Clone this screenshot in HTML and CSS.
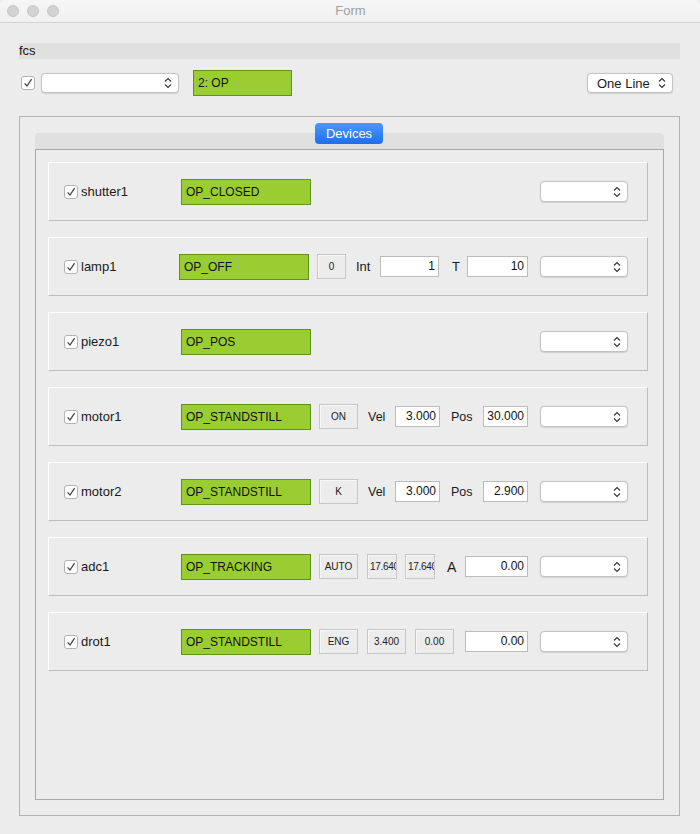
FILE: index.html
```html
<!DOCTYPE html>
<html>
<head>
<meta charset="utf-8">
<title>Form</title>
<link rel="stylesheet" href="styles.css">
</head>
<body>
<div class="window">
  <div class="titlebar">
    <div class="lights"><span class="light"></span><span class="light"></span><span class="light"></span></div>
    <div class="title">Form</div>
  </div>
  <div class="main">
    <div class="fcs">fcs</div>
    <div class="toprow">
      <span class="check"><svg width="14" height="14" viewBox="0 0 14 14"><path d="M3.6 7.4 L6 10 L10.6 3.2" fill="none" stroke="#444" stroke-width="1.3"/></svg></span>
      <div class="combo combo-top"><span></span><svg class="chev" width="8" height="12" viewBox="0 0 8 12"><path d="M1 4.5 L4 1.5 L7 4.5 M1 7.5 L4 10.5 L7 7.5" fill="none" stroke="#333" stroke-width="1.1"/></svg></div>
      <div class="state state-top">2: OP</div>
      <div class="combo combo-line"><span>One Line</span><svg class="chev" width="8" height="12" viewBox="0 0 8 12"><path d="M1 4.5 L4 1.5 L7 4.5 M1 7.5 L4 10.5 L7 7.5" fill="none" stroke="#333" stroke-width="1.1"/></svg></div>
    </div>
    <div class="group">
      <div class="tabs">
        <div class="tabbar"><div class="tab">Devices</div></div>
        <div class="pane">

          <div class="frame">
            <span class="check"><svg width="14" height="14" viewBox="0 0 14 14"><path d="M3.6 7.4 L6 10 L10.6 3.2" fill="none" stroke="#444" stroke-width="1.3"/></svg></span>
            <span class="name">shutter1</span>
            <div class="state">OP_CLOSED</div>
            <div class="combo combo-dev"><span></span><svg class="chev" width="8" height="12" viewBox="0 0 8 12"><path d="M1 4.5 L4 1.5 L7 4.5 M1 7.5 L4 10.5 L7 7.5" fill="none" stroke="#333" stroke-width="1.1"/></svg></div>
          </div>

          <div class="frame">
            <span class="check"><svg width="14" height="14" viewBox="0 0 14 14"><path d="M3.6 7.4 L6 10 L10.6 3.2" fill="none" stroke="#444" stroke-width="1.3"/></svg></span>
            <span class="name name-short">lamp1</span>
            <div class="state">OP_OFF</div>
            <div class="btn btn-narrow">0</div>
            <span class="lbl lbl-int">Int</span>
            <div class="field field-int">1</div>
            <span class="lbl lbl-t">T</span>
            <div class="field field-t">10</div>
            <div class="combo combo-dev"><span></span><svg class="chev" width="8" height="12" viewBox="0 0 8 12"><path d="M1 4.5 L4 1.5 L7 4.5 M1 7.5 L4 10.5 L7 7.5" fill="none" stroke="#333" stroke-width="1.1"/></svg></div>
          </div>

          <div class="frame">
            <span class="check"><svg width="14" height="14" viewBox="0 0 14 14"><path d="M3.6 7.4 L6 10 L10.6 3.2" fill="none" stroke="#444" stroke-width="1.3"/></svg></span>
            <span class="name">piezo1</span>
            <div class="state">OP_POS</div>
            <div class="combo combo-dev"><span></span><svg class="chev" width="8" height="12" viewBox="0 0 8 12"><path d="M1 4.5 L4 1.5 L7 4.5 M1 7.5 L4 10.5 L7 7.5" fill="none" stroke="#333" stroke-width="1.1"/></svg></div>
          </div>

          <div class="frame">
            <span class="check"><svg width="14" height="14" viewBox="0 0 14 14"><path d="M3.6 7.4 L6 10 L10.6 3.2" fill="none" stroke="#444" stroke-width="1.3"/></svg></span>
            <span class="name">motor1</span>
            <div class="state">OP_STANDSTILL</div>
            <div class="btn">ON</div>
            <span class="lbl lbl-vel">Vel</span>
            <div class="field field-sm">3.000</div>
            <span class="lbl lbl-pos">Pos</span>
            <div class="field field-sm">30.000</div>
            <div class="combo combo-dev"><span></span><svg class="chev" width="8" height="12" viewBox="0 0 8 12"><path d="M1 4.5 L4 1.5 L7 4.5 M1 7.5 L4 10.5 L7 7.5" fill="none" stroke="#333" stroke-width="1.1"/></svg></div>
          </div>

          <div class="frame">
            <span class="check"><svg width="14" height="14" viewBox="0 0 14 14"><path d="M3.6 7.4 L6 10 L10.6 3.2" fill="none" stroke="#444" stroke-width="1.3"/></svg></span>
            <span class="name">motor2</span>
            <div class="state">OP_STANDSTILL</div>
            <div class="btn">K</div>
            <span class="lbl lbl-vel">Vel</span>
            <div class="field field-sm">3.000</div>
            <span class="lbl lbl-pos">Pos</span>
            <div class="field field-sm">2.900</div>
            <div class="combo combo-dev"><span></span><svg class="chev" width="8" height="12" viewBox="0 0 8 12"><path d="M1 4.5 L4 1.5 L7 4.5 M1 7.5 L4 10.5 L7 7.5" fill="none" stroke="#333" stroke-width="1.1"/></svg></div>
          </div>

          <div class="frame">
            <span class="check"><svg width="14" height="14" viewBox="0 0 14 14"><path d="M3.6 7.4 L6 10 L10.6 3.2" fill="none" stroke="#444" stroke-width="1.3"/></svg></span>
            <span class="name">adc1</span>
            <div class="state">OP_TRACKING</div>
            <div class="btn">AUTO</div>
            <div class="btn btn-clip">17.640</div>
            <div class="btn btn-clip">17.640</div>
            <span class="lbl lbl-a">A</span>
            <div class="field field-wide">0.00</div>
            <div class="combo combo-dev"><span></span><svg class="chev" width="8" height="12" viewBox="0 0 8 12"><path d="M1 4.5 L4 1.5 L7 4.5 M1 7.5 L4 10.5 L7 7.5" fill="none" stroke="#333" stroke-width="1.1"/></svg></div>
          </div>

          <div class="frame">
            <span class="check"><svg width="14" height="14" viewBox="0 0 14 14"><path d="M3.6 7.4 L6 10 L10.6 3.2" fill="none" stroke="#444" stroke-width="1.3"/></svg></span>
            <span class="name">drot1</span>
            <div class="state">OP_STANDSTILL</div>
            <div class="btn">ENG</div>
            <div class="btn btn-gap">3.400</div>
            <div class="btn btn-gap">0.00</div>
            <div class="field field-wide field-drot">0.00</div>
            <div class="combo combo-dev"><span></span><svg class="chev" width="8" height="12" viewBox="0 0 8 12"><path d="M1 4.5 L4 1.5 L7 4.5 M1 7.5 L4 10.5 L7 7.5" fill="none" stroke="#333" stroke-width="1.1"/></svg></div>
          </div>

        </div>
      </div>
    </div>
  </div>
</div>
</body>
</html>
```
FILE: styles.css
```css
* { box-sizing: border-box; }
html, body {
  margin: 0;
  padding: 0;
  background: #ececec;
  font-family: "Liberation Sans", Arial, sans-serif;
  color: #1a1a1a;
}
.window {
  width: 700px;
  height: 834px;
  background: #ececec;
  overflow: hidden;
}
.titlebar {
  height: 23px;
  background: linear-gradient(#f6f6f6, #f0f0f0);
  border-bottom: 1px solid #d2d2d2;
  border-radius: 5px 5px 0 0;
  display: flex;
  align-items: center;
  position: relative;
}
.lights {
  display: flex;
  gap: 8px;
  padding-left: 7px;
}
.light {
  width: 12px;
  height: 12px;
  border-radius: 50%;
  background: #d3d3d3;
  border: 1px solid #c6c6c6;
}
.title {
  flex: 1;
  text-align: center;
  font-size: 13px;
  color: #a0a0a0;
  margin-right: 58px;
  line-height: 22px;
}
.main {
  padding: 20px 20px 0 19px;
}
.fcs {
  height: 16px;
  line-height: 16px;
  background: #e0e0e0;
  font-size: 13px;
  padding-left: 0;
}
.toprow {
  display: flex;
  align-items: center;
  height: 26px;
  margin-top: 11px;
}
.check {
  width: 14px;
  height: 14px;
  flex: none;
  background: #fff;
  border: 1px solid #b3b3b3;
  border-radius: 3px;
  display: flex;
  align-items: center;
  justify-content: center;
}
.check svg { display: block; margin: -1px; }
.toprow .check { margin-left: 2px; margin-right: 6px; }
.combo {
  flex: none;
  height: 21px;
  background: #fff;
  border: 1px solid #c3c3c3;
  border-radius: 4px;
  box-shadow: 0 0.5px 1px rgba(0,0,0,0.12);
  display: flex;
  align-items: center;
  justify-content: space-between;
  padding: 0 6px 0 9px;
  font-size: 13px;
}
.chev { display: block; flex: none; }
.combo-top { width: 138px; height: 20px; }
.combo-line { width: 86px; height: 20px; margin-left: auto; margin-right: 7px; }
.state {
  flex: none;
  width: 130px;
  height: 26px;
  background: #9acd32;
  border: 1px solid #5e9419;
  font-size: 12px;
  line-height: 24px;
  padding-left: 4px;
  color: #111;
  white-space: nowrap;
}
.state-top { width: 99px; margin-left: 14px; }
.group {
  margin-top: 20px;
  height: 700px;
  border: 1px solid #b3b3b3;
  padding: 16px 15px 15px 15px;
  display: flex;
}
.tabs {
  flex: 1;
  display: flex;
  flex-direction: column;
}
.tabbar {
  height: 16px;
  background: #e0e0e0;
  border-radius: 4px 4px 0 0;
  display: flex;
  justify-content: center;
  align-items: flex-start;
}
.tab {
  margin-top: -10px;
  margin-left: -1px;
  width: 68px;
  height: 21px;
  border-radius: 4px;
  background: linear-gradient(#4d97fb, #1b6ff5);
  color: #fff;
  font-size: 13px;
  line-height: 21px;
  text-align: center;
}
.pane {
  flex: 1;
  border: 1px solid #a9a9a9;
  padding: 12px 15px 12px 12px;
  display: flex;
  flex-direction: column;
  gap: 16px;
}
.frame {
  height: 59px;
  border-top: 1px solid #fff;
  border-left: 1px solid #fff;
  border-right: 1px solid #bdbdbd;
  border-bottom: 1px solid #bdbdbd;
  display: flex;
  align-items: center;
  padding: 0 19px 0 15px;
}
.frame .check { margin-right: 3px; }
.name {
  flex: none;
  width: 100px;
  font-size: 13px;
}
.name-short { width: 98px; }
.btn {
  flex: none;
  width: 39px;
  height: 25px;
  margin-left: 8px;
  background: #ececec;
  border: 1px solid #c6c6c6;
  box-shadow: inset 1px 1px 0 #f7f7f7;
  font-size: 10px;
  line-height: 23px;
  text-align: center;
  color: #222;
}
.btn-narrow { width: 29px; }
.btn-clip {
  width: 30px;
  overflow: hidden;
  white-space: nowrap;
  text-align: left;
  padding-left: 2px;
  letter-spacing: -0.3px;
}
.btn-clip:first-of-type { margin-left: 9px; }
.btn + .btn-clip { margin-left: 9px; }
.btn-clip + .btn-clip { margin-left: 8px; }
.btn-gap { margin-left: 9px; }
.btn-gap + .btn-gap { margin-left: 9px; }
.lbl {
  flex: none;
  font-size: 13px;
}
.lbl-int { margin-left: 10px; width: 24px; }
.lbl-t { margin-left: 13px; width: 15px; }
.lbl-vel { margin-left: 10px; width: 27px; font-size: 12.5px; }
.lbl-pos { margin-left: 11px; width: 32px; font-size: 12.5px; }
.lbl-a { margin-left: 12px; width: 18px; font-size: 14px; }
.field {
  flex: none;
  height: 21px;
  background: #fff;
  border: 1px solid #bcbcbc;
  font-size: 12px;
  line-height: 19px;
  text-align: right;
  padding-right: 3px;
  color: #111;
}
.field-int { width: 59px; }
.field-t { width: 61px; }
.field-sm { width: 45px; }
.field-wide { width: 63px; }
.field-drot { margin-left: 11px; }
.combo-dev { width: 88px; margin-left: auto; }
```
